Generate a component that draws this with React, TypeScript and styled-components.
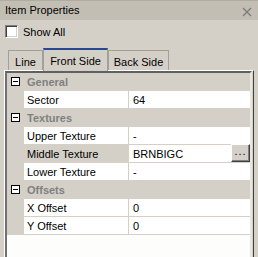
import React from 'react';
import styled, { createGlobalStyle } from 'styled-components';

const Global = createGlobalStyle`
  html, body { margin: 0; padding: 0; background: #d4d0c8; }
  body {
    font-family: "Liberation Sans", Arial, sans-serif;
    font-size: 11px;
    color: #000;
  }
  * { box-sizing: border-box; }
`;

const Window = styled.div`
  width: 258px;
  height: 257px;
  overflow: hidden;
  display: flex;
  flex-direction: column;
  background: #d4d0c8;
`;

const TitleBar = styled.div`
  height: 20px;
  flex: none;
  display: flex;
  align-items: center;
  justify-content: space-between;
  padding: 0 6px 0 5px;
  background: #c2beb3;
  border-top: 1px solid #b0aca2;
`;

const TitleText = styled.span`
  line-height: 13px;
`;

const CloseIcon = styled.svg`
  width: 10px;
  height: 10px;
  margin-top: 2px;
`;

const CheckRow = styled.label`
  display: flex;
  align-items: center;
  gap: 5px;
  margin: 5px 0 0 5px;
  height: 13px;
`;

const CheckBox = styled.span`
  width: 13px;
  height: 13px;
  background: #fff;
  border-top: 1px solid #808080;
  border-left: 1px solid #808080;
  border-right: 1px solid #fff;
  border-bottom: 1px solid #fff;
  box-shadow: inset 1px 1px 0 #404040, inset -1px -1px 0 #d4d0c8;
`;

const Tabs = styled.div`
  display: flex;
  align-items: flex-end;
  height: 22px;
  margin-top: 10px;
  padding-left: 8px;
  position: relative;
  z-index: 1;
`;

const Tab = styled.div<{ $active?: boolean; $width: number }>`
  width: ${(p) => p.$width}px;
  height: ${(p) => (p.$active ? 23 : 20)}px;
  display: flex;
  align-items: center;
  justify-content: center;
  padding-top: ${(p) => (p.$active ? 1 : 2)}px;
  background: #d4d0c8;
  border: 1px solid #a2a09a;
  border-bottom: none;
  border-top: ${(p) => (p.$active ? '2px solid #2a4790' : '1px solid #a2a09a')};
  margin-bottom: ${(p) => (p.$active ? -1 : 0)}px;
  white-space: nowrap;
  position: relative;
  z-index: ${(p) => (p.$active ? 2 : 1)};
`;

const Panel = styled.div`
  flex: 1;
  margin: 0 4px 0 4px;
  border-left: 1px solid #fff;
  border-top: 1px solid #fff;
  border-right: 1px solid #404040;
  padding: 0 1px 0 0;
`;

const Grid = styled.div`
  height: 100%;
  border-top: 2px solid #606060;
  border-left: 2px solid #707070;
  border-right: 2px solid #e8e6e0;
  background: #fdfdfc;
  display: flex;
  flex-direction: column;
`;

const Row = styled.div`
  height: 18px;
  display: flex;
  flex: none;
  border-bottom: 1px solid #d4d0c8;
`;

const Margin = styled.div`
  width: 17px;
  flex: none;
  background: #d4d0c8;
  display: flex;
  align-items: center;
  justify-content: center;
`;

const HeaderRow = styled(Row)`
  background: #d4d0c8;
  align-items: center;
`;

const HeaderText = styled.span`
  font-weight: bold;
  color: #808080;
  padding-left: 3px;
`;

const NameCell = styled.div<{ $selected?: boolean }>`
  width: 105px;
  flex: none;
  padding-left: 3px;
  display: flex;
  align-items: center;
  background: ${(p) => (p.$selected ? '#d4d0c8' : '#fff')};
  border-right: 1px solid #d4d0c8;
`;

const ValueCell = styled.div`
  flex: 1;
  padding-left: 4px;
  display: flex;
  align-items: center;
  justify-content: space-between;
  background: #fff;
`;

const DotsButton = styled.div`
  width: 19px;
  height: 18px;
  margin-top: -1px;
  display: flex;
  align-items: center;
  justify-content: center;
  background: #d4d0c8;
  border-top: 1px solid #fff;
  border-left: 1px solid #fff;
  border-right: 1px solid #404040;
  border-bottom: 1px solid #404040;
  box-shadow: inset -1px -1px 0 #808080;
  font-size: 11px;
  letter-spacing: 1px;
  padding-bottom: 4px;
  line-height: 1;
`;

const Collapse = () => (
  <svg width="9" height="9" viewBox="0 0 9 9">
    <rect x="0.5" y="0.5" width="8" height="8" fill="#fff" stroke="#000" />
    <line x1="2" y1="4.5" x2="7" y2="4.5" stroke="#000" />
  </svg>
);

type Item =
  | { kind: 'group'; label: string }
  | { kind: 'prop'; name: string; value: string; selected?: boolean; button?: boolean };

const items: Item[] = [
  { kind: 'group', label: 'General' },
  { kind: 'prop', name: 'Sector', value: '64' },
  { kind: 'group', label: 'Textures' },
  { kind: 'prop', name: 'Upper Texture', value: '-' },
  { kind: 'prop', name: 'Middle Texture', value: 'BRNBIGC', selected: true, button: true },
  { kind: 'prop', name: 'Lower Texture', value: '-' },
  { kind: 'group', label: 'Offsets' },
  { kind: 'prop', name: 'X Offset', value: '0' },
  { kind: 'prop', name: 'Y Offset', value: '0' },
];

const tabs = [
  { label: 'Line', width: 35 },
  { label: 'Front Side', width: 65, active: true },
  { label: 'Back Side', width: 61 },
];

export default function App() {
  return (
    <>
      <Global />
      <Window>
        <TitleBar>
          <TitleText>Item Properties</TitleText>
          <CloseIcon viewBox="0 0 10 10">
            <path d="M1 1 L9 9 M9 1 L1 9" stroke="#7a7a7a" strokeWidth="1.3" />
          </CloseIcon>
        </TitleBar>
        <CheckRow>
          <CheckBox />
          <span>Show All</span>
        </CheckRow>
        <Tabs>
          {tabs.map((t) => (
            <Tab key={t.label} $width={t.width} $active={t.active}>
              {t.label}
            </Tab>
          ))}
        </Tabs>
        <Panel>
          <Grid>
            {items.map((it, i) =>
              it.kind === 'group' ? (
                <HeaderRow key={i}>
                  <Margin>
                    <Collapse />
                  </Margin>
                  <HeaderText>{it.label}</HeaderText>
                </HeaderRow>
              ) : (
                <Row key={i}>
                  <Margin />
                  <NameCell $selected={it.selected}>{it.name}</NameCell>
                  <ValueCell>
                    <span>{it.value}</span>
                    {it.button && <DotsButton>...</DotsButton>}
                  </ValueCell>
                </Row>
              )
            )}
          </Grid>
        </Panel>
      </Window>
    </>
  );
}
